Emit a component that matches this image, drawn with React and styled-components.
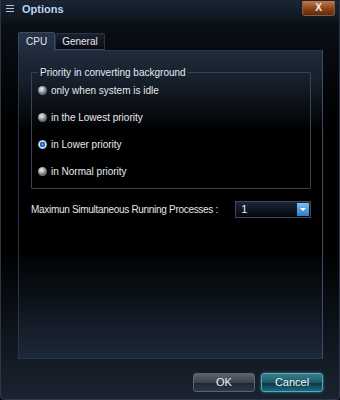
import React, { useState } from "react";
import styled, { createGlobalStyle } from "styled-components";

const GlobalStyle = createGlobalStyle`
  html, body {
    margin: 0;
    padding: 0;
    background: #000;
  }
  body {
    font-family: Tahoma, "Liberation Sans", Arial, sans-serif;
  }
`;

const PRIORITIES = [
  "only when system is idle",
  "in the Lowest priority",
  "in Lower priority",
  "in Normal priority",
];

const App = () => {
  const [tab, setTab] = useState("cpu");
  const [priority, setPriority] = useState(2);

  return (
    <>
      <GlobalStyle />
      <Window>
        <TitleBar>
          <MenuIcon>
            <span />
            <span />
            <span />
          </MenuIcon>
          <Title>Options</Title>
          <CloseButton>X</CloseButton>
        </TitleBar>
        <Body>
          <Tabs>
            <Tab active={tab === "cpu"} onClick={() => setTab("cpu")}>
              CPU
            </Tab>
            <Tab active={tab === "general"} onClick={() => setTab("general")}>
              General
            </Tab>
          </Tabs>
          <Panel>
            <Group>
              <Legend>Priority in converting background</Legend>
              {PRIORITIES.map((label, i) => (
                <RadioRow key={label} onClick={() => setPriority(i)}>
                  <RadioDot checked={priority === i} />
                  {label}
                </RadioRow>
              ))}
            </Group>
            <ProcessRow>
              <Label>Maximun Simultaneous Running Processes :</Label>
              <Select>
                <SelectValue>1</SelectValue>
                <SelectArrow />
              </Select>
            </ProcessRow>
          </Panel>
          <Footer>
            <Button>OK</Button>
            <Button primary>Cancel</Button>
          </Footer>
        </Body>
      </Window>
    </>
  );
};

const Window = styled.div`
  width: 340px;
  height: 400px;
  box-sizing: border-box;
  border: 1px solid #2c3646;
  border-top-color: #1a2230;
  border-radius: 0 0 4px 4px;
  display: flex;
  flex-direction: column;
  background: linear-gradient(
    to bottom,
    #151d28 0px,
    #0a0f16 24px,
    #000 120px,
    #000 250px,
    #0e141b 330px,
    #1a2330 398px
  );
`;

const TitleBar = styled.div`
  height: 22px;
  display: flex;
  align-items: flex-start;
  padding: 0 4px 0 5px;
  background: linear-gradient(to bottom, #1b2535, #0c121a);
`;

const MenuIcon = styled.div`
  display: flex;
  flex-direction: column;
  gap: 2px;
  margin-top: 4px;
  width: 8px;

  span {
    height: 1px;
    background: #b8c4d2;
  }
`;

const Title = styled.div`
  margin: 1px 0 0 8px;
  font-size: 11px;
  font-weight: bold;
  color: #bcd6f2;
  line-height: 14px;
`;

const CloseButton = styled.div`
  margin-left: auto;
  width: 33px;
  height: 15px;
  box-sizing: border-box;
  border: 1px solid #8a5c3c;
  border-top: none;
  border-radius: 0 0 3px 3px;
  background: linear-gradient(to bottom, #c37a48 0%, #8a441c 55%, #5c2a10 100%);
  color: #f4eee8;
  font-size: 10px;
  font-weight: bold;
  line-height: 14px;
  text-align: center;
`;

const Body = styled.div`
  flex: 1;
  display: flex;
  flex-direction: column;
  padding: 9px 16px 0 17px;
`;

const Tabs = styled.div`
  display: flex;
  align-items: flex-end;
  height: 18px;
  position: relative;
  z-index: 1;
`;

const Tab = styled.div`
  box-sizing: border-box;
  height: ${(p) => (p.active ? "19px" : "17px")};
  margin-bottom: ${(p) => (p.active ? "-1px" : "0")};
  padding: 0 ${(p) => (p.active ? "7px" : "6px")};
  font-size: 10px;
  line-height: ${(p) => (p.active ? "18px" : "16px")};
  color: #e4e8ee;
  cursor: default;
  border: 1px solid ${(p) => (p.active ? "#3a4a5e" : "#2a3442")};
  border-bottom: ${(p) => (p.active ? "none" : "1px solid #3a4a5e")};
  border-radius: 2px 2px 0 0;
  background: ${(p) =>
    p.active
      ? "linear-gradient(to bottom, #26344a, #1f2c3c)"
      : "linear-gradient(to bottom, #1a2230, #070a10)"};
`;

const Panel = styled.div`
  height: 309px;
  box-sizing: border-box;
  border: 1px solid #2a3648;
  border-right-color: #3e4e64;
  display: flex;
  flex-direction: column;
  padding: 16px 11px 0 12px;
  background: linear-gradient(
    to bottom,
    #1f2c3c 0px,
    #161f2b 30px,
    #000 80px,
    #000 200px,
    #0d131b 250px,
    #1c2838 307px
  );
`;

const Group = styled.fieldset`
  margin: 0;
  height: 122px;
  box-sizing: border-box;
  border: 1px solid #34445a;
  border-radius: 1px;
  padding: 4px 0 0 6px;
  display: flex;
  flex-direction: column;
  gap: 11px;
`;

const Legend = styled.legend`
  padding: 0 2px;
  margin-left: 0;
  font-size: 10px;
  color: #e6eaf0;
`;

const RadioRow = styled.label`
  display: flex;
  align-items: center;
  gap: 4px;
  height: 16px;
  font-size: 10px;
  color: #e6eaee;
  cursor: default;
`;

const RadioDot = styled.span`
  width: 9px;
  height: 9px;
  border-radius: 50%;
  box-sizing: border-box;
  background: ${(p) =>
    p.checked
      ? "radial-gradient(circle at 50% 50%, #4aa8ff 0, #1050c0 2.5px, #e6ecf2 3px, #8a96a4 4.5px)"
      : "radial-gradient(circle at 40% 35%, #f0f0f0 0, #b0b4ba 2.5px, #6c7078 4.5px)"};
`;

const ProcessRow = styled.div`
  display: flex;
  align-items: center;
  margin-top: 12px;
`;

const Label = styled.div`
  font-size: 10px;
  letter-spacing: -0.3px;
  color: #e2e6ea;
  width: 205px;
  white-space: nowrap;
`;

const Select = styled.div`
  width: 76px;
  height: 17px;
  box-sizing: border-box;
  border: 1px solid #3a4a62;
  display: flex;
  background: linear-gradient(to bottom, #1c2636, #04070b);
`;

const SelectValue = styled.div`
  flex: 1;
  padding-left: 5px;
  font-size: 11px;
  line-height: 15px;
  color: #f0f0f0;
`;

const SelectArrow = styled.div`
  width: 12px;
  margin: 1px;
  position: relative;
  background: linear-gradient(to bottom, #7cc0ec, #2c7cc0);

  &::after {
    content: "";
    position: absolute;
    left: 3px;
    top: 5px;
    border-left: 3px solid transparent;
    border-right: 3px solid transparent;
    border-top: 3px solid #fff;
  }
`;

const Footer = styled.div`
  display: flex;
  justify-content: flex-end;
  gap: 6px;
  padding: 14px 0 0;
`;

const Button = styled.div`
  width: 62px;
  height: 19px;
  box-sizing: border-box;
  border-radius: 3px;
  border: 1px solid ${(p) => (p.primary ? "#5ea6b6" : "#5a6470")};
  background: ${(p) =>
    p.primary
      ? "linear-gradient(to bottom, #3a7c8c 0%, #1e5866 50%, #0c3a46 55%, #1a6a80 100%)"
      : "linear-gradient(to bottom, #5a626c 0%, #3a424c 50%, #22282e 55%, #2a3a48 100%)"};
  box-shadow: ${(p) => (p.primary ? "0 0 3px #2a8aa0" : "none")};
  color: #f2f4f6;
  font-size: 11px;
  line-height: 17px;
  text-align: center;
  cursor: default;
`;

export default App;
